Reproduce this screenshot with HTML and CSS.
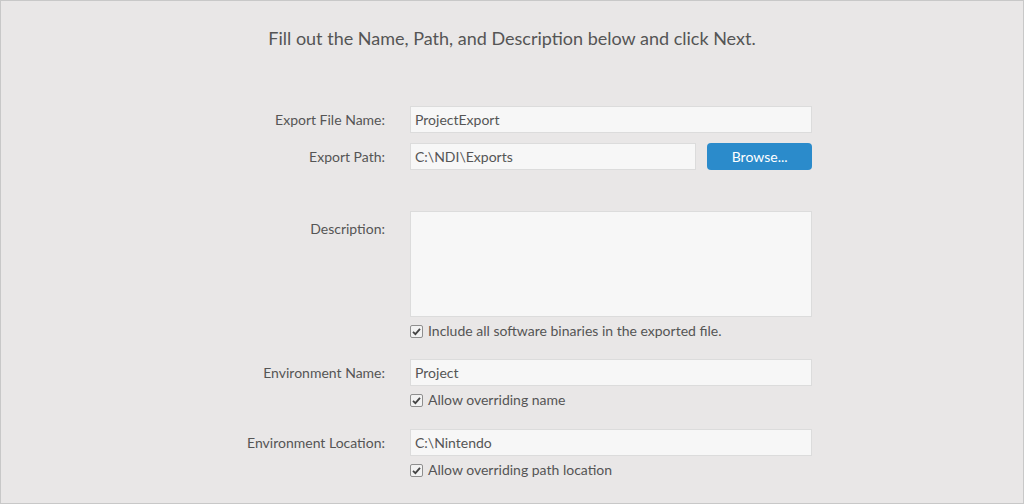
FILE: index.html
```html
<!DOCTYPE html>
<html>
<head>
<meta charset="utf-8">
<link rel="stylesheet" href="styles.css">
</head>
<body>
<div class="frame">
  <h1 class="title">Fill out the Name, Path, and Description below and click Next.</h1>
  <div class="form">
    <div class="row">
      <label class="label">Export File Name:</label>
      <div class="field"><div class="input">ProjectExport</div></div>
    </div>
    <div class="row row-path">
      <label class="label">Export Path:</label>
      <div class="field path-field">
        <div class="input input-path">C:\NDI\Exports</div>
        <button class="btn">Browse...</button>
      </div>
    </div>
    <div class="row row-desc">
      <label class="label label-top">Description:</label>
      <div class="field">
        <div class="textarea"></div>
        <div class="check"><span class="box"><svg width="13" height="13" viewBox="0 0 13 13"><path d="M3 6.8 L5.4 9.2 L10 3.8" fill="none" stroke="#444" stroke-width="1.8"/></svg></span>Include all software binaries in the exported file.</div>
      </div>
    </div>
    <div class="row row-env">
      <label class="label">Environment Name:</label>
      <div class="field">
        <div class="input">Project</div>
        <div class="check"><span class="box"><svg width="13" height="13" viewBox="0 0 13 13"><path d="M3 6.8 L5.4 9.2 L10 3.8" fill="none" stroke="#444" stroke-width="1.8"/></svg></span>Allow overriding name</div>
      </div>
    </div>
    <div class="row row-loc">
      <label class="label">Environment Location:</label>
      <div class="field">
        <div class="input">C:\Nintendo</div>
        <div class="check"><span class="box"><svg width="13" height="13" viewBox="0 0 13 13"><path d="M3 6.8 L5.4 9.2 L10 3.8" fill="none" stroke="#444" stroke-width="1.8"/></svg></span>Allow overriding path location</div>
      </div>
    </div>
  </div>
</div>
</body>
</html>
```

FILE: styles.css
```css
* { box-sizing: border-box; }
html, body { margin: 0; padding: 0; }
body {
  font-family: Lato, "Open Sans", sans-serif;
  color: #555;
  background: #e9e7e7;
}
.frame {
  width: 1024px;
  height: 504px;
  border: 1px solid #c8c8c8;
  background: #e9e7e7;
  overflow: hidden;
}
.title {
  margin: 0;
  padding-top: 26px;
  font-size: 18px;
  font-weight: normal;
  text-align: center;
  color: #555;
  line-height: 22px;
}
.form {
  margin-top: 57px;
  display: flex;
  flex-direction: column;
}
.row {
  display: grid;
  grid-template-columns: 384px 402px;
  column-gap: 25px;
  align-items: start;
}
.row-path { margin-top: 10px; }
.row-desc { margin-top: 41px; }
.row-env { margin-top: 19px; }
.row-loc { margin-top: 20px; }
.label {
  text-align: right;
  font-size: 14px;
  line-height: 27px;
  color: #555;
}
.label-top { padding-top: 4px; }
.field { display: flex; flex-direction: column; }
.path-field { flex-direction: row; gap: 11px; }
.input {
  height: 27px;
  background: #f7f7f7;
  border: 1px solid #dcdcdc;
  font-size: 14px;
  line-height: 25px;
  padding-left: 4px;
  color: #555;
}
.input-path { width: 287px; }
.btn {
  width: 105px;
  height: 27px;
  border: none;
  border-radius: 4px;
  background: #2b8bcb;
  color: #fff;
  font-family: Lato, sans-serif;
  font-size: 14px;
  padding: 0;
  line-height: 27px;
}
.textarea {
  height: 106px;
  background: #f7f7f7;
  border: 1px solid #dcdcdc;
}
.check {
  display: flex;
  align-items: center;
  margin-top: 5px;
  font-size: 14px;
  line-height: 18px;
  color: #555;
}
.box {
  width: 13px;
  height: 13px;
  border: 1px solid #8f8f8f;
  border-radius: 2px;
  background: #f2f2f2;
  margin-right: 5px;
  display: flex;
  align-items: center;
  justify-content: center;
  position: relative;
}
.box svg { position: absolute; left: -1px; top: -1px; }
```
